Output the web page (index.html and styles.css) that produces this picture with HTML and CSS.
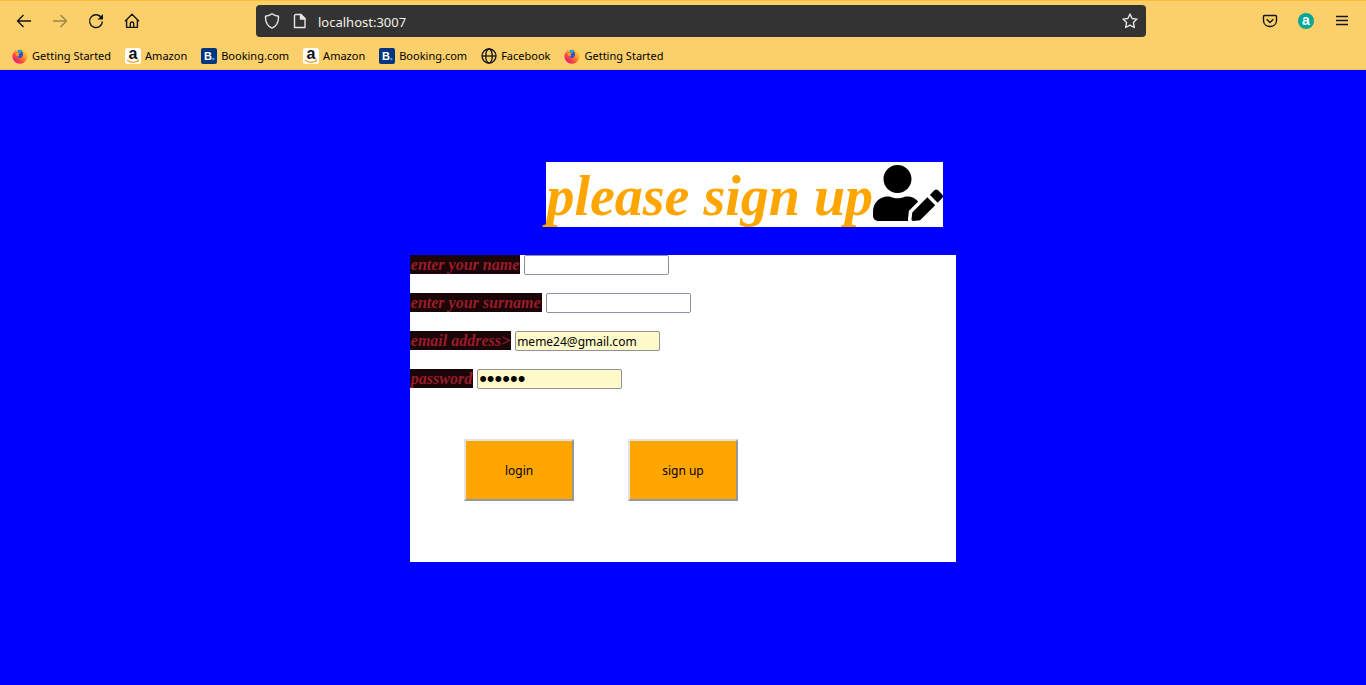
FILE: index.html
```html
<!DOCTYPE html>
<html lang="en">
<head>
<meta charset="utf-8">
<title>Sign up</title>
<link rel="stylesheet" href="styles.css">
</head>
<body>
<svg class="defs" aria-hidden="true">
  <defs>
    <linearGradient id="flame" x1="0.9" y1="0.1" x2="0.2" y2="0.9">
      <stop offset="0" stop-color="#ffe040"/><stop offset="0.4" stop-color="#ff9a1f"/><stop offset="0.75" stop-color="#ff3f46"/><stop offset="1" stop-color="#e5178a"/>
    </linearGradient>
    <symbol id="firefox" viewBox="0 0 16 16">
      <path fill="url(#flame)" d="M9.500 .3c.4 1.500 1.400 2 2.600 2.900.3-.3.300-.6.300-.8 1.900 1.500 3 3.600 3 5.800A7.500 7.500 0 0 1 .4 8.500c0-2 .8-3.600 1.700-4.800l.1 1.300L3.900 1.800l.8 2c.8-.2 1.300 0 1.900 0L9.500 .3z"/>
      <path fill="#2a4fd0" d="M6 2.300c2.300-1 4.800.9 5 3.500.2 2.400-1.200 4.300-3.200 4.300-1.700 0-2.800-.9-3-2.200.9.400 1.900.1 2.600-.5-1.300-.3-2.100-.8-2.200-1.900l1.500-.6C5.900 4.300 5.600 3.300 6 2.300z"/>
      <path fill="#1e9df2" d="M5.200 2.600C6.500 1.300 9 1.500 10 3.700L8.300 5.300 6.600 4.800z"/>
      <path fill="#ff9a24" d="M3.300 5.200c1-.7 2.300-.6 3.200-.1l1.600.5-1.900 1.400c.3.600 1 .8 1.800.600-.7 1-2.200 1.400-3.600.5z"/>
    </symbol>
    <symbol id="amazon" viewBox="0 0 16 16">
      <rect width="16" height="16" rx="2.500" fill="#fff"/>
      <text class="logo-letter" x="8" y="10.500" font-size="16" fill="#111">a</text>
      <path fill="none" stroke="#ffa41c" stroke-width="1.300" d="M2 11.900c3.600 2.900 8 2.900 11.500.7"/>
      <path fill="#ffa41c" d="M11.500 11.700l3-.3-.9 2.700z"/>
    </symbol>
    <symbol id="booking" viewBox="0 0 16 16">
      <rect width="16" height="16" rx="2" fill="#003580"/>
      <text class="logo-letter" x="7" y="12" font-size="11" fill="#fff">B</text>
      <circle cx="12.300" cy="11" r="1.300" fill="#18aef0"/>
    </symbol>
    <symbol id="globe" viewBox="0 0 16 16">
      <g fill="none" stroke="#15141a" stroke-width="1.300"><circle cx="8" cy="8" r="7"/><ellipse cx="8" cy="8" rx="3.300" ry="7"/><path d="M1 8h14"/></g>
    </symbol>
  </defs>
</svg>

<header class="chrome">
  <nav class="toolbar" aria-label="Browser">
    <div class="nav-buttons">
      <button class="icon-button" aria-label="Back"><svg viewBox="0 0 16 16"><path d="M15 8H1.500M7.500 2l-6 6 6 6"/></svg></button>
      <button class="icon-button faded" aria-label="Forward"><svg viewBox="0 0 16 16"><path d="M1 8h13.500M8.500 2l6 6-6 6"/></svg></button>
      <button class="icon-button" aria-label="Reload"><svg viewBox="0 0 16 16"><path d="M13.600 5A6.400 6.400 0 1 0 14.400 8.500"/><path class="solid" d="M15 1v5.500H9.500z"/></svg></button>
      <button class="icon-button" aria-label="Home"><svg viewBox="0 0 16 16"><path d="M1 8.200L8 1.300l7 6.900M2.600 7v7.400h10.800V7M6.300 14.400V10.500c0-2 3.400-2 3.400 0v3.900"/></svg></button>
    </div>
    <div class="address">
      <div class="site-icons">
        <svg class="address-icon" viewBox="0 0 16 16"><path d="M8 .8C6.200 2.200 3.800 3 1.500 3.200c-.2 5.500 1.400 9.700 6.500 12 5.100-2.300 6.700-6.500 6.500-12C12.200 3 9.800 2.200 8 .8z"/></svg>
        <svg class="address-icon" viewBox="0 0 16 16"><path d="M3.500 1.500H9l4 4v9H2.500v-12z"/><path class="solid" d="M8.500 1.500V6H13z"/></svg>
      </div>
      <input class="url" type="text" aria-label="Address" value="localhost:3007">
      <svg class="address-icon" viewBox="0 0 16 16"><path d="M8 1l2.100 4.500 4.900.6-3.600 3.400.9 5L8 12.100l-4.300 2.400.9-5L1 6.100l4.900-.6z"/></svg>
    </div>
    <div class="tools">
      <button class="icon-button" aria-label="Pocket"><svg viewBox="0 0 16 16"><path d="M2.500 2.500h11c.7 0 1 .4 1 1v4c0 8-13 8-13 0v-4c0-.6.300-1 1-1zM4.700 6.300L8 9.400l3.300-3.100"/></svg></button>
      <button class="icon-button" aria-label="Assistant"><svg viewBox="0 0 16 16"><circle class="teal" cx="8" cy="8" r="8"/><text class="logo-letter light" x="8" y="12" font-size="14">a</text></svg></button>
      <button class="icon-button" aria-label="Menu"><svg viewBox="0 0 16 16"><path d="M2 3.500h12M2 7.500h12M2 11.500h12"/></svg></button>
    </div>
  </nav>
  <nav class="bookmarks" aria-label="Bookmarks">
    <a class="bookmark" href="#"><svg><use href="#firefox"/></svg>Getting Started</a>
    <a class="bookmark" href="#"><svg><use href="#amazon"/></svg>Amazon</a>
    <a class="bookmark" href="#"><svg><use href="#booking"/></svg>Booking.com</a>
    <a class="bookmark" href="#"><svg><use href="#amazon"/></svg>Amazon</a>
    <a class="bookmark" href="#"><svg><use href="#booking"/></svg>Booking.com</a>
    <a class="bookmark" href="#"><svg><use href="#globe"/></svg>Facebook</a>
    <a class="bookmark" href="#"><svg><use href="#firefox"/></svg>Getting Started</a>
  </nav>
</header>

<main class="page">
  <h1 class="title">please sign up<svg class="user-edit" viewBox="0 0 640 512" aria-hidden="true"><path d="M224 256c70.700 0 128-57.300 128-128S294.700 0 224 0 96 57.300 96 128s57.300 128 128 128zm89.600 32h-16.700c-22.200 10.200-46.900 16-72.900 16s-50.600-5.800-72.900-16h-16.700C60.200 288 0 348.200 0 422.400V464c0 26.500 21.500 48 48 48h274.900c-2.400-6.800-3.400-14-2.600-21.300l6.800-60.900 1.200-11.100 7.900-7.900 77.300-77.300c-24.500-27.700-60-45.500-99.900-45.500zm45.300 145.300l-6.800 61c-1.100 10.200 7.500 18.800 17.600 17.600l60.900-6.800 137.900-137.900-71.700-71.700-137.900 137.800zM633 268.900L595.100 231c-9.300-9.300-24.500-9.300-33.800 0l-37.800 37.800-4.100 4.100 71.800 71.700 41.800-41.800c9.300-9.400 9.300-24.500 0-33.900z"/></svg></h1>
  <form class="signup">
    <div class="field"><label for="name">enter your name</label><input id="name" type="text"></div>
    <div class="field"><label for="surname">enter your surname</label><input id="surname" type="text"></div>
    <div class="field"><label for="email">email address&gt;</label><input class="filled" id="email" type="email" value="meme24@gmail.com"></div>
    <div class="field"><label for="password">password</label><input class="filled secret" id="password" type="password" value="secret"></div>
    <div class="actions">
      <button class="action" type="button">login</button>
      <button class="action" type="button">sign up</button>
    </div>
  </form>
</main>
</body>
</html>
```

FILE: styles.css
```css
* { box-sizing: border-box; }
body {
  margin: 0;
  min-height: 100vh;
  background: #0000ff;
  font-family: "Liberation Serif", serif;
}
.defs { position: absolute; width: 0; height: 0; }

.chrome {
  background: #fbd06a;
  border-top: 1px solid #ffbd33;
  border-bottom: 1px solid #fbbf45;
  font-family: "Noto Sans", sans-serif;
  color: #15141a;
}
.toolbar {
  display: grid;
  grid-template-columns: 256px 1fr 220px;
  height: 40px;
  align-items: center;
}
.nav-buttons, .tools { display: flex; gap: 20px; }
.nav-buttons { padding-left: 16px; }
.tools { justify-content: flex-end; padding-right: 16px; }
.icon-button {
  width: 16px;
  height: 16px;
  padding: 0;
  border: 0;
  background: none;
}
.icon-button svg {
  display: block;
  width: 16px;
  height: 16px;
  overflow: visible;
  fill: none;
  stroke: #15141a;
  stroke-width: 1.4;
  stroke-linejoin: round;
}
.faded { opacity: 0.4; }
.icon-button .solid { fill: #15141a; stroke: none; }
.icon-button .teal { fill: #00a698; stroke: none; }
.icon-button .light { fill: #fff; stroke: none; }
.logo-letter {
  font-family: "Liberation Sans", sans-serif;
  font-weight: bold;
  text-anchor: middle;
}

.address {
  display: flex;
  align-items: center;
  gap: 10px;
  height: 32px;
  padding: 0 8px;
  border-radius: 4px;
  background: #333333;
}
.site-icons { display: flex; gap: 12px; }
.address-icon {
  flex: none;
  width: 16px;
  height: 16px;
  fill: none;
  stroke: #e6e6e6;
  stroke-width: 1.4;
  stroke-linejoin: round;
}
.address-icon .solid { fill: #e6e6e6; }
.url {
  flex: 1;
  min-width: 0;
  padding: 1px 0 0;
  border: 0;
  outline: 0;
  background: none;
  color: #f5f0e6;
  font: 13px "Noto Sans", sans-serif;
}

.bookmarks {
  display: flex;
  gap: 14px;
  height: 28px;
  padding: 1px 12px 0;
  align-items: center;
}
.bookmark {
  display: flex;
  align-items: center;
  gap: 4px;
  color: #000;
  font-size: 11px;
  line-height: 17px;
  text-decoration: none;
  white-space: nowrap;
}
.bookmark svg { width: 16px; height: 16px; }

.page { padding-top: 92px; }
.title {
  display: flex;
  align-items: center;
  width: max-content;
  height: 65px;
  margin: 0 0 28px 40%;
  background: #fff;
  color: orange;
  font-size: 56px;
  font-style: italic;
  line-height: 64px;
  padding-top: 2px;
}
.user-edit { width: 70px; height: 56px; margin-bottom: 6px; fill: #000; }

.signup {
  width: 40%;
  margin-left: 30%;
  padding-bottom: 61px;
  background: #fff;
}
.field {
  display: flex;
  align-items: flex-start;
  gap: 4px;
  margin-bottom: 18px;
}
.field label {
  padding: 1px 1px 0;
  background: #1a0508;
  color: #9b1c28;
  font-size: 16px;
  font-style: italic;
  font-weight: bold;
  line-height: 18px;
}
.field input {
  width: 145px;
  height: 20px;
  padding: 0 1px;
  border: 1px solid #8f8f9d;
  border-radius: 2px;
  background: #fff;
  color: #000;
  font: 12px "Noto Sans", sans-serif;
}
.field .filled { background: #fffac8; }
.field .secret { font: 22px "Liberation Sans", sans-serif; }

.actions { display: flex; padding-top: 32px; }
.action {
  width: 20%;
  height: 62px;
  margin-left: 10%;
  border: 2px solid;
  border-color: #e3e3e3 #979797 #979797 #e3e3e3;
  background: orange;
  color: #000;
  font: 12px "Noto Sans", sans-serif;
}
```
